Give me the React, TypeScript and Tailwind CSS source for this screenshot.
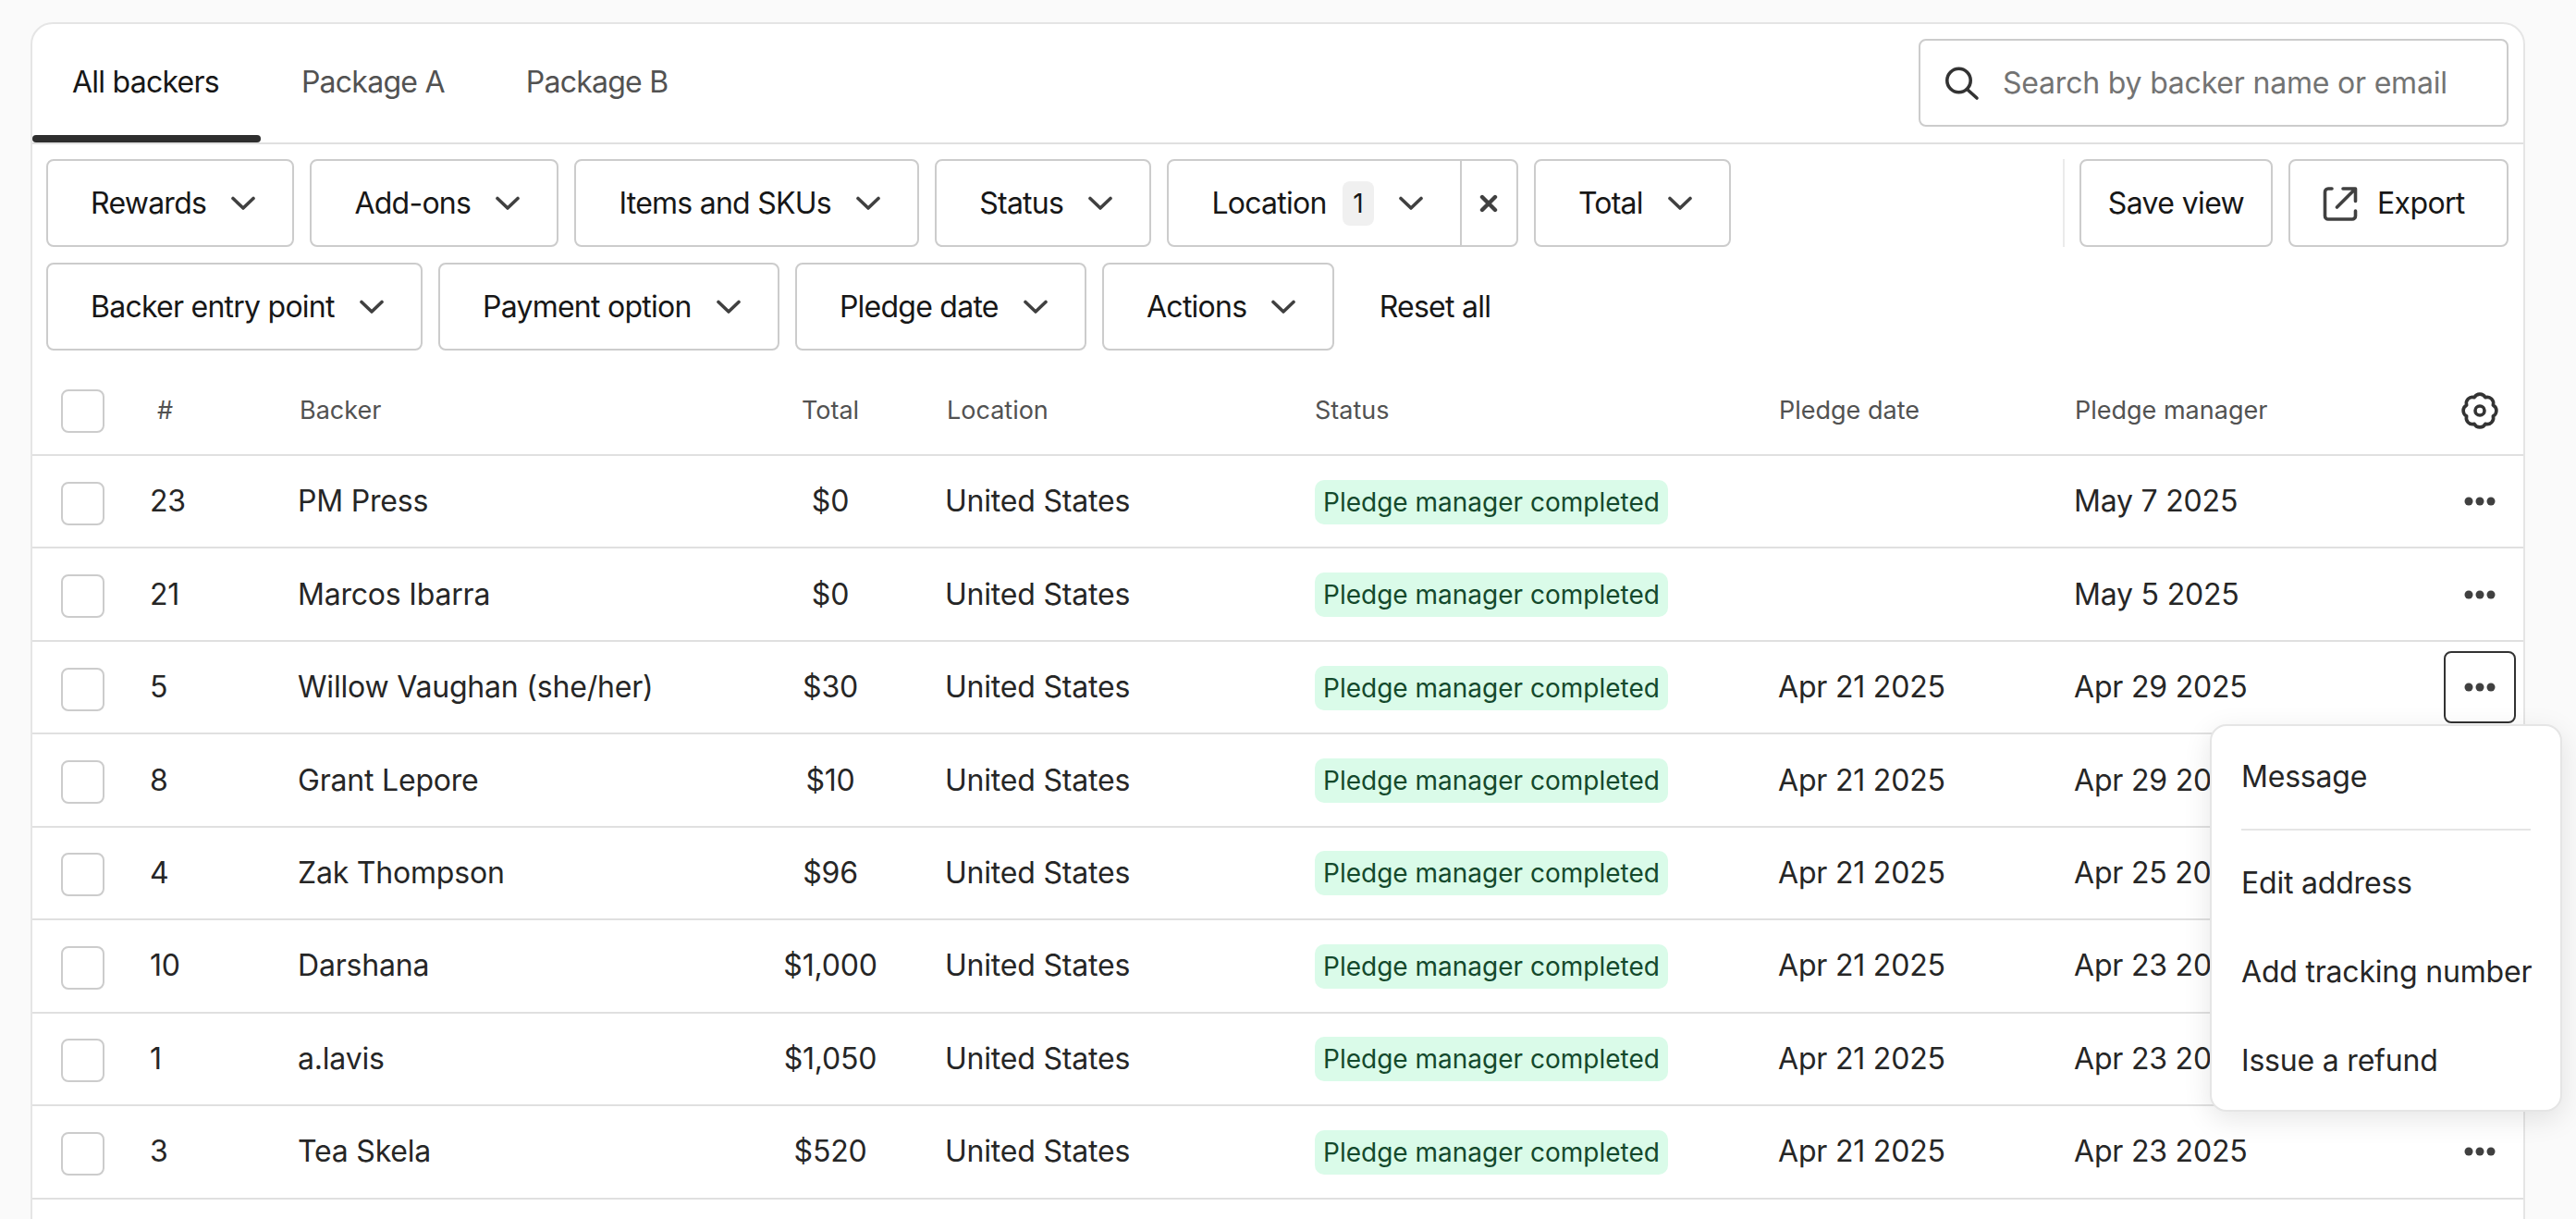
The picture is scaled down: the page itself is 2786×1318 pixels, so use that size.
const backers = [
  { id: 23, name: 'PM Press', total: '$0', pledgeDate: '', manager: 'May 7 2025' },
  { id: 21, name: 'Marcos Ibarra', total: '$0', pledgeDate: '', manager: 'May 5 2025' },
  { id: 5, name: 'Willow Vaughan (she/her)', total: '$30', pledgeDate: 'Apr 21 2025', manager: 'Apr 29 2025', open: true },
  { id: 8, name: 'Grant Lepore', total: '$10', pledgeDate: 'Apr 21 2025', manager: 'Apr 29 2025' },
  { id: 4, name: 'Zak Thompson', total: '$96', pledgeDate: 'Apr 21 2025', manager: 'Apr 25 2025' },
  { id: 10, name: 'Darshana', total: '$1,000', pledgeDate: 'Apr 21 2025', manager: 'Apr 23 2025' },
  { id: 1, name: 'a.lavis', total: '$1,050', pledgeDate: 'Apr 21 2025', manager: 'Apr 23 2025' },
  { id: 3, name: 'Tea Skela', total: '$520', pledgeDate: 'Apr 21 2025', manager: 'Apr 23 2025' },
];

const gridCols =
  'grid grid-cols-[127px_160px_478px_196px_426px_501px_320px_400px_85px] items-center';

function Chevron() {
  return (
    <svg width="28" height="16" viewBox="0 0 28 16" fill="none" className="shrink-0">
      <path d="M3 2.500 14 13 25 2.500" stroke="#404040" strokeWidth="3.6" strokeLinecap="round" strokeLinejoin="round" />
    </svg>
  );
}

function SearchIcon() {
  return (
    <svg width="38" height="38" viewBox="0 0 38 38" fill="none" className="shrink-0">
      <circle cx="15.5" cy="16" r="12.7" stroke="#333333" strokeWidth="3.6" />
      <path d="M25 26 35 35" stroke="#333333" strokeWidth="3.6" strokeLinecap="round" />
    </svg>
  );
}

function ExportIcon() {
  return (
    <svg width="38" height="38" viewBox="0 0 38 38" fill="none" className="shrink-0">
      <path
        d="M10 3H6a3.500 3.500 0 0 0-3.500 3.500v26A3.500 3.500 0 0 0 6 36h26a3.500 3.500 0 0 0 3.500-3.500V27"
        stroke="#404040"
        strokeWidth="3.6"
        strokeLinecap="round"
      />
      <path d="M22 3h13.500v13.500M35 3.500 15.500 23" stroke="#404040" strokeWidth="3.6" strokeLinecap="round" strokeLinejoin="round" />
    </svg>
  );
}

function gearPath() {
  const points = Array.from({ length: 8 }, (_, i) => {
    const angle = ((22.5 + 45 * i - 90) * Math.PI) / 180;
    return `${(20 + 15.5 * Math.cos(angle)).toFixed(2)} ${(20 + 15.5 * Math.sin(angle)).toFixed(2)}`;
  });
  return `M${points[7]} ` + points.map((p) => `A6.7 6.7 0 0 1 ${p}`).join(' ') + 'Z';
}

function GearIcon() {
  return (
    <svg width="40" height="40" viewBox="0 0 40 40" fill="none">
      <path d={gearPath()} stroke="#333333" strokeWidth="3.6" strokeLinejoin="round" />
      <circle cx="20" cy="20" r="5" stroke="#333333" strokeWidth="3.6" />
    </svg>
  );
}

function Dots() {
  return (
    <svg width="34" height="10" viewBox="0 0 34 10" fill="#404040">
      <circle cx="5" cy="5" r="4.5" />
      <circle cx="17" cy="5" r="4.5" />
      <circle cx="29" cy="5" r="4.5" />
    </svg>
  );
}

function FilterButton({ label }: { label: string }) {
  return (
    <button className="flex h-[95px] items-center gap-[26px] rounded-[8px] border-2 border-[#cccccc] bg-white pl-[46px] pr-[39px] text-[32px] tracking-[-0.75px] text-[#171717]">
      {label}
      <Chevron />
    </button>
  );
}

function RowMenu() {
  return (
    <div className="absolute right-[-50px] top-[79px] z-10 w-[381px] rounded-[18px] border-2 border-[#e5e5e5] bg-white pb-[5px] pl-[32px] pr-[32px] text-[32px] tracking-[-0.2px] text-[#262626] shadow-[0_8px_30px_rgba(0,0,0,0.10)]">
      <div className="flex h-[113px] items-center border-b-2 border-[#e5e5e5] pb-[2px]">Message</div>
      <div className="mt-[9px] flex h-[96px] items-center">Edit address</div>
      <div className="flex h-[96px] items-center whitespace-nowrap">Add tracking number</div>
      <div className="flex h-[96px] items-center">Issue a refund</div>
    </div>
  );
}

export default function App() {
  return (
    <div className="h-[1318px] overflow-hidden bg-[#fafafa] pl-[33px] pt-[24px] font-['Inter',sans-serif]">
      <div className="h-[1400px] w-[2698px] rounded-t-[24px] border-2 border-[#e5e5e5] bg-white">
        {/* tabs + search */}
        <div className="flex h-[130px] justify-between border-b-2 border-[#e0e0e0] pr-[16px]">
          <div className="flex h-full text-[32px] tracking-[-0.75px] text-[#525252]">
            <div className="relative flex h-full items-center pb-[2px] pl-[43px] pr-[45px] text-[#171717]">
              All backers
              <span className="absolute bottom-0 left-0 right-0 h-[8px] rounded-[4px] bg-[#2e2e2e]" />
            </div>
            <div className="flex h-full items-center px-[44px] pb-[2px]">Package A</div>
            <div className="flex h-full items-center px-[44px] pb-[2px]">Package B</div>
          </div>
          <div className="mt-[16px] flex h-[95px] w-[638px] items-center gap-[25px] rounded-[8px] border-2 border-[#cccccc] pl-[26px]">
            <SearchIcon />
            <span className="text-[32px] tracking-[-0.2px] text-[#737373]">Search by backer name or email</span>
          </div>
        </div>

        {/* filters */}
        <div className="flex flex-col gap-[17px] pb-[16px] pl-[15px] pr-[16px] pt-[16px]">
          <div className="flex justify-between">
            <div className="flex gap-[17.3px]">
              <FilterButton label="Rewards" />
              <FilterButton label="Add-ons" />
              <FilterButton label="Items and SKUs" />
              <FilterButton label="Status" />
              <div className="flex h-[95px] items-stretch rounded-[8px] border-2 border-[#cccccc] text-[32px] tracking-[-0.75px] text-[#171717]">
                <div className="flex items-center pl-[46px] pr-[39px]">
                  Location
                  <span className="ml-[17px] flex h-[48px] w-[34px] items-center justify-center rounded-[8px] bg-[#f0f0f0] text-[28px]">
                    1
                  </span>
                  <span className="ml-[26px]">
                    <Chevron />
                  </span>
                </div>
                <div className="flex w-[61px] items-center justify-center border-l-2 border-[#cccccc]">
                  <svg width="20" height="20" viewBox="0 0 20 20" fill="none">
                    <path d="M3 3 17 17M17 3 3 17" stroke="#404040" strokeWidth="4.4" strokeLinecap="round" />
                  </svg>
                </div>
              </div>
              <FilterButton label="Total" />
            </div>
            <div className="flex gap-[17px] border-l-2 border-[#ebebeb] pl-[16px]">
              <button className="flex h-[95px] w-[209px] items-center justify-center rounded-[8px] border-2 border-[#cccccc] text-[32px] tracking-[-0.64px] text-[#171717]">
                Save view
              </button>
              <button className="flex h-[95px] w-[238px] items-center gap-[21px] rounded-[8px] border-2 border-[#cccccc] pl-[35px] text-[32px] tracking-[-0.64px] text-[#171717]">
                <ExportIcon />
                Export
              </button>
            </div>
          </div>
          <div className="flex gap-[17.3px]">
            <FilterButton label="Backer entry point" />
            <FilterButton label="Payment option" />
            <FilterButton label="Pledge date" />
            <FilterButton label="Actions" />
            <button className="ml-[31px] text-[32px] tracking-[-0.75px] text-[#171717]">Reset all</button>
          </div>
        </div>

        {/* table */}
        <div className={`${gridCols} h-[98px] border-b-2 border-[#e0e0e0] pt-[2px] text-[27px] text-[#525252]`}>
          <div className="pl-[31px]">
            <div className="h-[47px] w-[47px] rounded-[8px] border-2 border-[#cccccc]" />
          </div>
          <div className="pl-[8px]">#</div>
          <div className="pl-[2px]">Backer</div>
          <div className="text-center">Total</div>
          <div className="pl-[28px]">Location</div>
          <div>Status</div>
          <div className="pl-[1px]">Pledge date</div>
          <div className="pl-[1px]">Pledge manager</div>
          <div className="pl-[19px]">
            <GearIcon />
          </div>
        </div>
        {backers.map((b) => (
          <div
            key={b.id}
            className={`${gridCols} h-[100.44px] border-b-2 border-[#e0e0e0] text-[32px] tracking-[-0.2px] text-[#262626]`}
          >
            <div className="mt-[4px] pl-[31px]">
              <div className="h-[47px] w-[47px] rounded-[8px] border-2 border-[#cccccc]" />
            </div>
            <div>{b.id}</div>
            <div>{b.name}</div>
            <div className="text-center">{b.total}</div>
            <div className="pl-[26px]">United States</div>
            <div>
              <span className="inline-flex h-[48px] items-center rounded-[10px] bg-[#dafbe9] px-[9px] text-[28px] tracking-normal text-[#14492c]">
                Pledge manager completed
              </span>
            </div>
            <div>{b.pledgeDate}</div>
            <div>{b.manager}</div>
            <div className="relative flex h-[78px] w-[78px] items-center justify-center">
              {b.open && (
                <>
                  <span className="absolute inset-0 rounded-[8px] border-2 border-[#333333]" />
                  <RowMenu />
                </>
              )}
              <Dots />
            </div>
          </div>
        ))}
      </div>
    </div>
  );
}
